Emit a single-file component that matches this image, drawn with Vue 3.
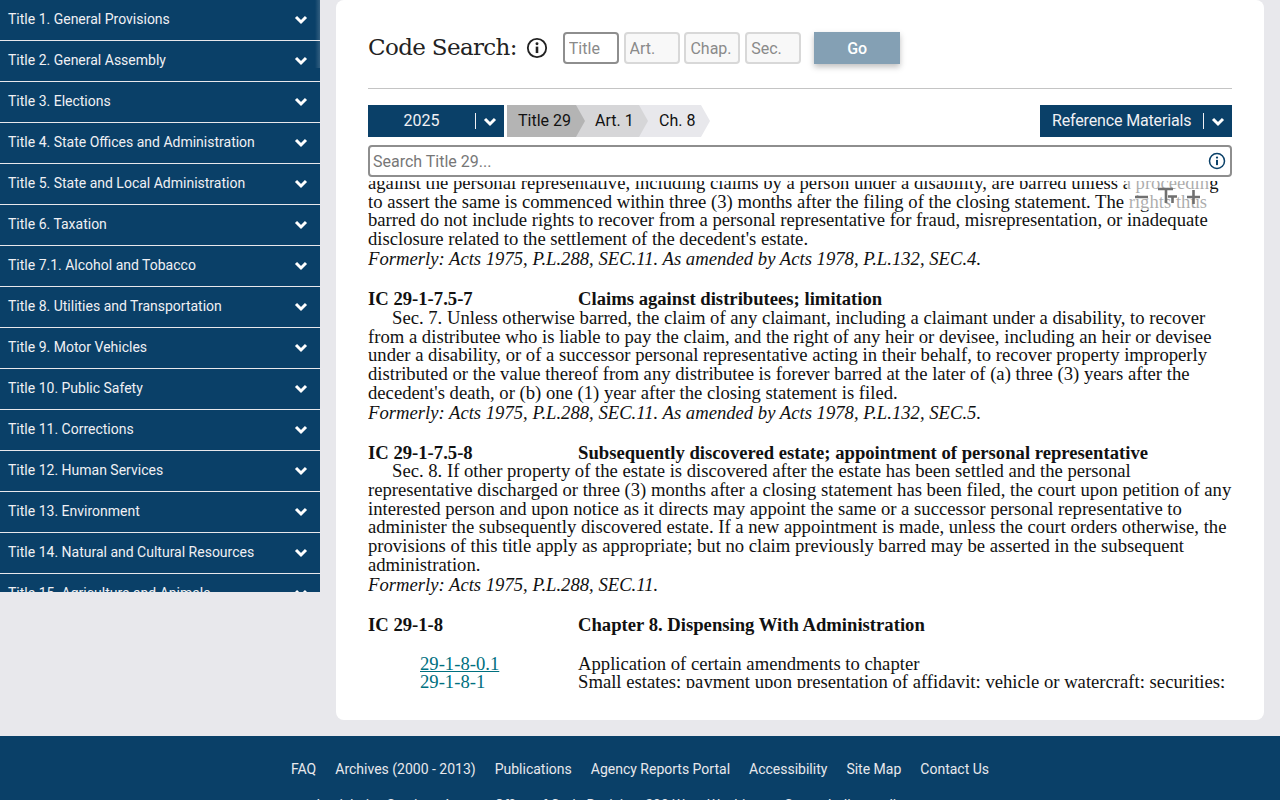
<template>
  <div class="page">
    <div class="main-row">
      <aside class="sidebar">
        <div v-for="title in titles" :key="title" class="title-row">
          <span>{{ title }}</span>
          <svg class="chev" viewBox="0 0 14 10" width="14" height="10"><path d="M2 2l5 5 5-5" /></svg>
        </div>
        <div class="side-fade"></div>
      </aside>

      <main class="card">
        <div class="search-head">
          <h1 class="search-label">Code Search:</h1>
          <svg class="info dark" viewBox="0 0 24 24" width="22" height="22">
            <circle cx="12" cy="12" r="10" />
            <rect class="fill" x="10.6" y="10.5" width="2.8" height="7" />
            <circle class="fill" cx="12" cy="7.4" r="1.6" />
          </svg>
          <div class="code-inputs">
            <input class="code-input focus" placeholder="Title" />
            <input class="code-input" placeholder="Art." />
            <input class="code-input" placeholder="Chap." />
            <input class="code-input" placeholder="Sec." />
          </div>
          <button class="go">Go</button>
        </div>

        <div class="crumb-row">
          <div class="select year">
            <span class="select-text">2025</span>
            <span class="select-sep"></span>
            <svg class="chev" viewBox="0 0 14 10" width="14" height="10"><path d="M2 2l5 5 5-5" /></svg>
          </div>
          <div class="crumbs">
            <span class="crumb c1">Title 29</span>
            <span class="crumb c2">Art. 1</span>
            <span class="crumb c3">Ch. 8</span>
          </div>
          <div class="select refs">
            <span class="select-text">Reference Materials</span>
            <span class="select-sep"></span>
            <svg class="chev" viewBox="0 0 14 10" width="14" height="10"><path d="M2 2l5 5 5-5" /></svg>
          </div>
        </div>

        <div class="title-search">
          <input placeholder="Search Title 29..." />
          <svg class="info blue" viewBox="0 0 24 24" width="18" height="18">
            <circle cx="12" cy="12" r="10" />
            <rect class="fill" x="10.7" y="10.5" width="2.6" height="7" />
            <circle class="fill" cx="12" cy="7.4" r="1.5" />
          </svg>
        </div>

        <div class="code-wrap">
          <div class="code-text">
            <p class="line-block">
              against the personal representative, including claims by a person under a disability, are barred unless a proceeding<br />
              to assert the same is commenced within three (3) months after the filing of the closing statement. The rights thus<br />
              barred do not include rights to recover from a personal representative for fraud, misrepresentation, or inadequate<br />
              disclosure related to the settlement of the decedent's estate.
              <i class="note">Formerly: Acts 1975, P.L.288, SEC.11. As amended by Acts 1978, P.L.132, SEC.4.</i>
            </p>

            <div v-for="sec in sections" :key="sec.id" class="section">
              <div class="sec-head"><b class="sec-id">{{ sec.id }}</b><b>{{ sec.name }}</b></div>
              <p class="line-block">
                <template v-for="(line, i) in sec.lines" :key="i">
                  <span :class="{ indent: i === 0 }">{{ line }}</span><br v-if="i < sec.lines.length - 1" />
                </template>
                <i class="note">{{ sec.note }}</i>
              </p>
            </div>

            <div class="sec-head chapter"><b class="sec-id">IC 29-1-8</b><b>Chapter 8. Dispensing With Administration</b></div>
            <div class="toc-list">
              <div v-for="item in toc" :key="item.num" class="toc-row">
                <a class="toc-num" :class="{ under: item.under }">{{ item.num }}</a>
                <span>{{ item.name }}</span>
              </div>
            </div>
          </div>

          <div class="font-tools">
            <svg viewBox="0 0 70 20" width="70" height="20">
              <path d="M2 10h13M25 2h15M33 2v14M35 9.5h9M39.5 9.5v6.5M54 10h13M60.5 3v14" />
            </svg>
          </div>
        </div>
      </main>
    </div>

    <footer class="footer">
      <nav class="foot-links">
        <a v-for="link in links" :key="link">{{ link }}</a>
      </nav>
      <div class="foot-small">Legislative Services Agency, Office of Code Revision, 200 West Washington Street, Indianapolis</div>
    </footer>
  </div>
</template>

<script setup>
const titles = [
  'Title 1. General Provisions',
  'Title 2. General Assembly',
  'Title 3. Elections',
  'Title 4. State Offices and Administration',
  'Title 5. State and Local Administration',
  'Title 6. Taxation',
  'Title 7.1. Alcohol and Tobacco',
  'Title 8. Utilities and Transportation',
  'Title 9. Motor Vehicles',
  'Title 10. Public Safety',
  'Title 11. Corrections',
  'Title 12. Human Services',
  'Title 13. Environment',
  'Title 14. Natural and Cultural Resources',
  'Title 15. Agriculture and Animals',
];

const sections = [
  {
    id: 'IC 29-1-7.5-7',
    name: 'Claims against distributees; limitation',
    lines: [
      'Sec. 7. Unless otherwise barred, the claim of any claimant, including a claimant under a disability, to recover',
      'from a distributee who is liable to pay the claim, and the right of any heir or devisee, including an heir or devisee',
      'under a disability, or of a successor personal representative acting in their behalf, to recover property improperly',
      'distributed or the value thereof from any distributee is forever barred at the later of (a) three (3) years after the',
      "decedent's death, or (b) one (1) year after the closing statement is filed.",
    ],
    note: 'Formerly: Acts 1975, P.L.288, SEC.11. As amended by Acts 1978, P.L.132, SEC.5.',
  },
  {
    id: 'IC 29-1-7.5-8',
    name: 'Subsequently discovered estate; appointment of personal representative',
    lines: [
      'Sec. 8. If other property of the estate is discovered after the estate has been settled and the personal',
      'representative discharged or three (3) months after a closing statement has been filed, the court upon petition of any',
      'interested person and upon notice as it directs may appoint the same or a successor personal representative to',
      'administer the subsequently discovered estate. If a new appointment is made, unless the court orders otherwise, the',
      'provisions of this title apply as appropriate; but no claim previously barred may be asserted in the subsequent',
      'administration.',
    ],
    note: 'Formerly: Acts 1975, P.L.288, SEC.11.',
  },
];

const toc = [
  { num: '29-1-8-0.1', name: 'Application of certain amendments to chapter', under: true },
  { num: '29-1-8-1', name: 'Small estates; payment upon presentation of affidavit; vehicle or watercraft; securities;', under: false },
];

const links = ['FAQ', 'Archives (2000 - 2013)', 'Publications', 'Agency Reports Portal', 'Accessibility', 'Site Map', 'Contact Us'];
</script>

<style scoped>
.page {
  width: 1280px;
  height: 800px;
  overflow: hidden;
  background-color: #e8e8ec;
  font-family: Roboto, sans-serif;
}

.main-row {
  display: flex;
  height: 736px;
}

.sidebar {
  position: relative;
  width: 320px;
  height: 592px;
  flex-shrink: 0;
  overflow: hidden;
  background-color: #0a4068;
}

.side-fade {
  position: absolute;
  top: 0;
  right: 0;
  width: 5px;
  height: 68px;
  background: linear-gradient(to right, rgba(232, 232, 236, 0), rgba(232, 232, 236, 0.18));
}

.title-row {
  display: flex;
  justify-content: space-between;
  align-items: center;
  height: 38px;
  padding: 0 12px 2px 8px;
  border-bottom: 1px solid #e8e8ec;
  font-size: 14px;
  color: #f0f0f4;
}

.chev {
  flex-shrink: 0;
  margin-top: 1px;
}

.chev path {
  fill: none;
  stroke: #fff;
  stroke-width: 3;
}

.card {
  width: 928px;
  height: 720px;
  margin-left: 16px;
  padding: 0 32px;
  box-sizing: border-box;
  background-color: #fff;
  border-radius: 8px;
  display: flex;
  flex-direction: column;
}

.search-head {
  display: flex;
  align-items: center;
  height: 89px;
  padding-top: 8px;
  box-sizing: border-box;
  border-bottom: 1px solid #c4c4c4;
}

.search-label {
  margin: 0 9px 2px 0;
  font-family: "DejaVu Serif", serif;
  font-weight: 400;
  font-size: 23px;
  letter-spacing: -0.65px;
  color: #222;
}

.info circle:first-child {
  fill: none;
  stroke-width: 2;
}

.info.dark circle:first-child {
  stroke: #222;
}

.info.dark .fill {
  fill: #222;
}

.info.blue circle:first-child {
  stroke: #0a4068;
}

.info.blue .fill {
  fill: #0a4068;
}

.code-inputs {
  display: flex;
  gap: 4.8px;
  margin-left: 15px;
}

.code-input {
  width: 56px;
  height: 32px;
  box-sizing: border-box;
  padding: 0 4px;
  border: 2px solid #d8d8d8;
  border-radius: 4px;
  background-color: #f8f8f8;
  font-family: Roboto, sans-serif;
  font-size: 16px;
  outline: none;
}

.code-input.focus {
  border-color: #8e8e8e;
  background-color: #fff;
}

.code-input::placeholder {
  color: #8a8a8a;
}

.go {
  width: 86px;
  height: 32px;
  margin-left: 13px;
  border: none;
  background-color: #84a0b4;
  color: #fff;
  font-family: Roboto, sans-serif;
  font-weight: 500;
  font-size: 16px;
  box-shadow: 0 3px 6px rgba(0, 0, 0, 0.25);
}

.crumb-row {
  display: flex;
  align-items: center;
  margin-top: 16px;
}

.select {
  display: flex;
  align-items: center;
  height: 32px;
  background-color: #0a4068;
  color: #f0f0f4;
  font-size: 16px;
}

.select-text {
  padding-bottom: 2px;
}

.year {
  width: 136px;
}

.year .select-text {
  width: 107px;
  text-align: center;
}

.refs {
  margin-left: auto;
  width: 192px;
}

.refs .select-text {
  margin-left: 12px;
  width: 151px;
  white-space: nowrap;
  letter-spacing: -0.15px;
}

.select-sep {
  width: 1px;
  height: 16px;
  background-color: #f0f0f4;
  margin-right: 7px;
}

.crumbs {
  display: flex;
  margin-left: 3px;
}

.crumb {
  display: flex;
  align-items: center;
  height: 32px;
  padding-bottom: 2px;
  font-size: 16px;
  color: #111;
  box-sizing: border-box;
  clip-path: polygon(0 0, calc(100% - 9px) 0, 100% 50%, calc(100% - 9px) 100%, 0 100%);
}

.c1 {
  width: 78px;
  padding-left: 11px;
  background-color: #b4b4b4;
  position: relative;
  z-index: 3;
}

.c2 {
  width: 72px;
  padding-left: 19px;
  margin-left: -9px;
  background-color: #d6d6d8;
  position: relative;
  z-index: 2;
}

.c3 {
  width: 71px;
  padding-left: 20px;
  margin-left: -9px;
  background-color: #e8e8ec;
}

.title-search {
  position: relative;
  margin-top: 8px;
}

.title-search input {
  display: block;
  width: 100%;
  height: 32px;
  box-sizing: border-box;
  padding: 0 3px;
  border: 2px solid #8e8e8e;
  border-radius: 4px;
  font-family: Roboto, sans-serif;
  font-size: 16px;
  outline: none;
}

.title-search input::placeholder {
  color: #777;
}

.title-search .info {
  position: absolute;
  right: 6px;
  top: 7px;
}

.code-wrap {
  position: relative;
  height: 507px;
  margin-top: 4px;
  overflow: hidden;
}

.code-text {
  font-family: "Liberation Serif", serif;
  font-size: 18.67px;
  line-height: 18.7px;
  color: #111;
  margin-top: -7px;
  white-space: nowrap;
}

.line-block {
  margin: 0;
}

.note {
  display: block;
  margin-top: 1.3px;
}

.indent {
  padding-left: 24px;
}

.section {
  margin-top: 21.3px;
}

.sec-head {
  display: flex;
}

.sec-id {
  width: 210px;
}

.chapter {
  margin-top: 21.3px;
}

.toc-list {
  margin-top: 20px;
}

.toc-row {
  display: flex;
}

.toc-num {
  margin-left: 52px;
  width: 158px;
  color: #00707f;
}

.toc-num.under {
  text-decoration: underline;
}

.font-tools {
  position: absolute;
  right: 22px;
  top: 0;
  width: 83px;
  height: 29px;
  padding: 6px 0 0 6px;
  box-sizing: border-box;
  background-color: rgba(255, 255, 255, 0.65);
}

.font-tools svg {
  display: block;
}

.font-tools path {
  fill: none;
  stroke: #707070;
  stroke-width: 2.6;
}

.footer {
  height: 64px;
  background-color: #0a4068;
  color: #e8e8ec;
  font-size: 14px;
  overflow: hidden;
}

.foot-links {
  display: flex;
  justify-content: center;
  gap: 19px;
  padding-top: 24px;
  line-height: 18px;
}

.foot-small {
  margin-top: 19px;
  padding-right: 60px;
  text-align: center;
  white-space: nowrap;
  font-size: 14px;
}
</style>
